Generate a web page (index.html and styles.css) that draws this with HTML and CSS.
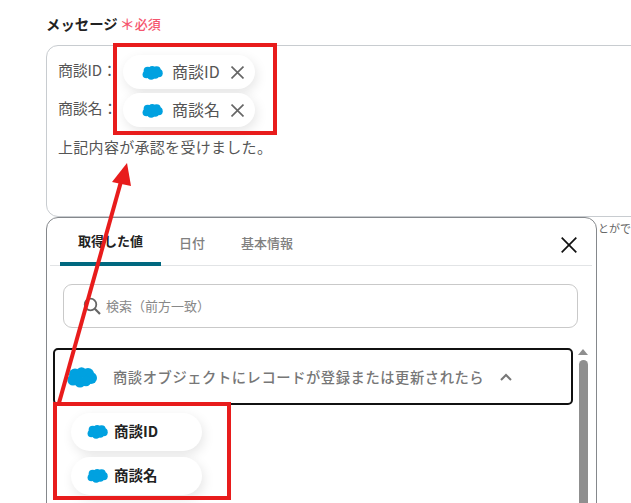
FILE: index.html
```html
<!DOCTYPE html>
<html lang="ja">
<head>
<meta charset="utf-8">
<title>メッセージ</title>
<link rel="stylesheet" href="styles.css">
</head>
<body>
<svg class="defs" width="0" height="0" aria-hidden="true">
  <symbol id="cloud" viewBox="0 0 30 22">
    <g fill="#00a1e0">
      <circle cx="8" cy="8.5" r="6"/>
      <circle cx="14.5" cy="6.5" r="5.2"/>
      <circle cx="21" cy="8" r="6"/>
      <circle cx="24" cy="12" r="6"/>
      <circle cx="6" cy="14" r="5.6"/>
      <circle cx="13" cy="16" r="5.6"/>
      <circle cx="19" cy="15" r="5.2"/>
    </g>
  </symbol>
  <symbol id="cross" viewBox="0 0 12 12">
    <path d="M.5.5l11 11M11.5.5l-11 11" fill="none" stroke="currentColor" stroke-width="1.5"/>
  </symbol>
</svg>
<main class="page">
  <div class="label-row">
    <span class="label">メッセージ</span>
    <span class="asterisk">＊</span>
    <span class="required">必須</span>
  </div>
  <div class="editor">
    <div class="editor-line">
      <span class="line-key">商談ID：</span>
      <span class="chip chip-top">
        <svg class="chip-cloud"><use href="#cloud"/></svg>
        <span class="chip-name">商談ID</span>
        <svg class="chip-x"><use href="#cross"/></svg>
      </span>
    </div>
    <div class="editor-line">
      <span class="line-key">商談名：</span>
      <span class="chip chip-top">
        <svg class="chip-cloud"><use href="#cloud"/></svg>
        <span class="chip-name">商談名</span>
        <svg class="chip-x"><use href="#cross"/></svg>
      </span>
    </div>
    <p class="editor-text">上記内容が承認を受けました。</p>
  </div>
  <div class="lower">
    <section class="panel">
      <div class="tabs">
        <span class="tab tab-active">取得した値</span>
        <span class="tab">日付</span>
        <span class="tab">基本情報</span>
        <svg class="panel-close" viewBox="0 0 16 16"><path d="M.7.7l14.6 14.6M15.3.7L.7 15.3" fill="none" stroke="#111" stroke-width="1.7"/></svg>
      </div>
      <div class="search">
        <svg class="search-icon" viewBox="0 0 18 18"><circle cx="7.5" cy="7.5" r="5.8" fill="none" stroke="#666" stroke-width="1.8"/><path d="M11.8 11.8L17 17" stroke="#666" stroke-width="2.2"/></svg>
        <span>検索（前方一致）</span>
      </div>
      <div class="list-wrap">
        <div class="list">
          <div class="group">
            <svg class="group-cloud"><use href="#cloud"/></svg>
            <span class="group-title">商談オブジェクトにレコードが登録または更新されたら</span>
            <svg class="chevron" viewBox="0 0 12 8"><path d="M1 7l5-5 5 5" fill="none" stroke="#777" stroke-width="2"/></svg>
          </div>
          <div class="chip chip-list">
            <svg class="chip-cloud"><use href="#cloud"/></svg>
            <span>商談ID</span>
          </div>
          <div class="chip chip-list">
            <svg class="chip-cloud"><use href="#cloud"/></svg>
            <span>商談名</span>
          </div>
        </div>
        <div class="scrollbar">
          <span class="scroll-up"></span>
          <span class="scroll-thumb"></span>
        </div>
      </div>
    </section>
    <span class="side-text">とがで</span>
  </div>
</main>
<div class="mark mark-top"></div>
<div class="mark mark-bottom"></div>
<svg class="arrow" viewBox="0 0 631 503" aria-hidden="true">
  <path d="M59 403L122 178" stroke="#e81c1c" stroke-width="4" fill="none"/>
  <path d="M127 163L112 182L131 186Z" fill="#e81c1c"/>
</svg>
</body>
</html>
```

FILE: styles.css
```css
* { box-sizing: border-box; }
html, body { margin: 0; height: 503px; overflow: hidden; background: #fff; }
body {
  position: relative;
  font-family: "Noto Sans CJK JP", "Noto Sans", sans-serif;
  color: #555;
}
.defs { position: absolute; }
.page { padding: 11px 0 0 46px; width: 631px; overflow: hidden; height: 503px; }

.label-row { display: flex; align-items: center; height: 24px; margin-bottom: 10px; }
.label { font-size: 14.4px; font-weight: 700; color: #222; }
.asterisk { margin-left: 2px; font-size: 15px; line-height: 14px; color: #f5566e; font-weight: 500; padding-top: 2px; }
.required { margin-left: 0; font-size: 13px; font-weight: 500; color: #f5566e; padding-top: 1px; }

.editor {
  width: 654px;
  height: 172px;
  padding: 9px 11px;
  border: 1px solid #c8ccd0;
  border-radius: 12px;
  font-size: 15px;
}
.editor-line { display: flex; align-items: center; height: 34px; margin-bottom: 4px; }
.line-key { width: 65px; padding-bottom: 5px; letter-spacing: -.2px; flex: none; }
.editor-text { margin: 9px 0 0; line-height: 22px; letter-spacing: .3px; }

.chip {
  display: flex;
  align-items: center;
  background: #fff;
  border-radius: 20px;
  box-shadow: 2px 4px 12px rgba(0, 0, 0, .1);
}
.chip-top { width: 132px; height: 34px; padding-left: 19px; color: #555; }
.chip-cloud { width: 21px; height: 15px; }
.chip-name { margin-left: 9px; font-size: 16px; line-height: 32px; padding-bottom: 2px; }
.chip-x { width: 13px; height: 13px; margin-left: 11px; color: #666; }

.lower { display: flex; align-items: flex-start; }
.panel {
  flex: none;
  width: 551px;
  height: 400px;
  border: 1px solid #85888c;
  border-radius: 12px;
  background: #fff;
}
.side-text { margin: 3px 0 0 1px; font-size: 11px; line-height: 16px; color: #666; white-space: nowrap; }

.tabs {
  position: relative;
  display: flex;
  height: 48px;
  margin: 0 4px 0 3px;
  padding-left: 10px;
  border-bottom: 1px solid #e2e4e6;
}
.tab {
  display: flex;
  align-items: center;
  justify-content: center;
  height: 48px;
  margin-right: 36px;
  font-size: 13px;
  font-weight: 500;
  color: #808080;
}
.tab-active {
  width: 101px;
  margin-right: 18px;
  font-weight: 700;
  color: #222;
  border-bottom: 4px solid #00687f;
  border-radius: 4px 4px 0 0;
  padding-top: 1px;
}
.panel-close { position: absolute; right: 15px; top: 19px; width: 16px; height: 16px; }

.search {
  display: flex;
  align-items: center;
  width: 515px;
  height: 44px;
  margin: 18px 0 0 16px;
  padding: 0 0 1px 19px;
  border: 1px solid #c9c9c9;
  border-radius: 9px;
  font-size: 13px;
  color: #888;
}
.search-icon { width: 18px; height: 18px; margin-right: 5px; }

.list-wrap { display: flex; margin: 20px 0 0 6px; }
.list { width: 520px; }
.group {
  display: flex;
  align-items: center;
  height: 57px;
  padding-left: 12px;
  border: 2px solid #111;
  border-radius: 5px;
  color: #777;
}
.group-cloud { width: 30px; height: 22px; margin-right: 16px; }
.group-title { font-size: 14.3px; letter-spacing: .55px; font-weight: 500; white-space: nowrap; }
.chevron { width: 12px; height: 8px; margin-left: 16px; }

.chip-list {
  width: 131px;
  height: 38px;
  margin: 8px 0 0 18px;
  padding: 0 0 3px 16px;
  font-size: 14.5px;
  font-weight: 700;
  color: #222;
}
.chip-list + .chip-list { margin-top: 6px; }
.chip-list .chip-cloud { margin: 2px 6px 0 0; }

.scrollbar {
  display: flex;
  flex-direction: column;
  align-items: center;
  width: 12px;
  margin-left: 4px;
}
.scroll-up {
  width: 0;
  height: 0;
  border: 5px solid transparent;
  border-top: 0;
  border-bottom: 6px solid #8f8f8f;
  margin-top: 1px;
}
.scroll-thumb { width: 9px; height: 200px; margin-top: 5px; background: #8f8f8f; border-radius: 5px; }

.mark { position: absolute; border: 4px solid #e81c1c; }
.mark-top { left: 113px; top: 43px; width: 164px; height: 92px; }
.mark-bottom { left: 53px; top: 402px; width: 178px; height: 98px; }
.arrow { position: absolute; left: 0; top: 0; width: 631px; height: 503px; }
```
